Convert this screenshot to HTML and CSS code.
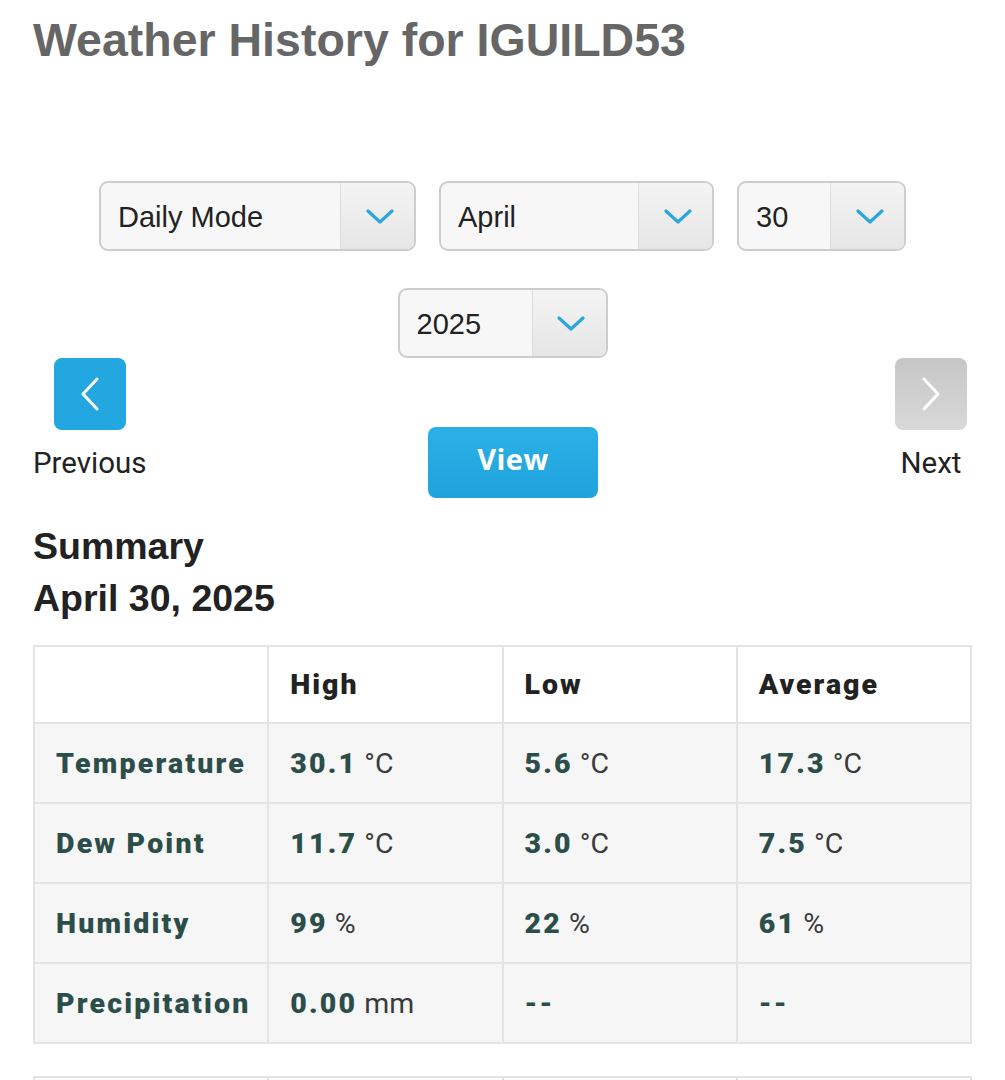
FILE: index.html
```html
<!DOCTYPE html>
<html lang="en">
<head>
<meta charset="utf-8">
<title>Weather History for IGUILD53</title>
<link rel="stylesheet" href="styles.css">
</head>
<body>
<div class="page">
  <h1 class="title">Weather History for IGUILD53</h1>

  <div class="selects">
    <div class="select-row">
      <div class="select w-mode"><span class="select-text">Daily Mode</span><span class="select-arrow"><svg width="28" height="15" viewBox="0 0 28 15"><polyline points="2,2 14,13 26,2" fill="none" stroke="#2aa6dc" stroke-width="3.2" stroke-linecap="round" stroke-linejoin="round"/></svg></span></div>
      <div class="select w-month"><span class="select-text">April</span><span class="select-arrow"><svg width="28" height="15" viewBox="0 0 28 15"><polyline points="2,2 14,13 26,2" fill="none" stroke="#2aa6dc" stroke-width="3.2" stroke-linecap="round" stroke-linejoin="round"/></svg></span></div>
      <div class="select w-day"><span class="select-text">30</span><span class="select-arrow"><svg width="28" height="15" viewBox="0 0 28 15"><polyline points="2,2 14,13 26,2" fill="none" stroke="#2aa6dc" stroke-width="3.2" stroke-linecap="round" stroke-linejoin="round"/></svg></span></div>
    </div>
    <div class="select-row">
      <div class="select w-year"><span class="select-text">2025</span><span class="select-arrow"><svg width="28" height="15" viewBox="0 0 28 15"><polyline points="2,2 14,13 26,2" fill="none" stroke="#2aa6dc" stroke-width="3.2" stroke-linecap="round" stroke-linejoin="round"/></svg></span></div>
    </div>
  </div>

  <div class="nav">
    <div class="nav-item prev">
      <span class="nav-btn blue"><svg width="20" height="34" viewBox="0 0 20 34"><polyline points="17,2 3,17 17,32" fill="none" stroke="#fff" stroke-width="3" stroke-linecap="round" stroke-linejoin="round"/></svg></span>
      <span class="nav-label">Previous</span>
    </div>
    <button class="view-btn">View</button>
    <div class="nav-item next">
      <span class="nav-btn gray"><svg width="20" height="34" viewBox="0 0 20 34"><polyline points="3,2 17,17 3,32" fill="none" stroke="#fff" stroke-width="3" stroke-linecap="round" stroke-linejoin="round"/></svg></span>
      <span class="nav-label">Next</span>
    </div>
  </div>

  <h2 class="summary">Summary<br>April 30, 2025</h2>

  <table class="wx">
    <thead>
      <tr><th></th><th>High</th><th>Low</th><th>Average</th></tr>
    </thead>
    <tbody>
      <tr><td class="lbl">Temperature</td><td><b>30.1</b> <span class="u">°C</span></td><td><b>5.6</b> <span class="u">°C</span></td><td><b>17.3</b> <span class="u">°C</span></td></tr>
      <tr><td class="lbl">Dew Point</td><td><b>11.7</b> <span class="u">°C</span></td><td><b>3.0</b> <span class="u">°C</span></td><td><b>7.5</b> <span class="u">°C</span></td></tr>
      <tr><td class="lbl">Humidity</td><td><b>99</b> <span class="u">%</span></td><td><b>22</b> <span class="u">%</span></td><td><b>61</b> <span class="u">%</span></td></tr>
      <tr><td class="lbl">Precipitation</td><td><b>0.00</b> <span class="u">mm</span></td><td><b>--</b></td><td><b>--</b></td></tr>
    </tbody>
  </table>

  <table class="wx second">
    <thead>
      <tr><th></th><th></th><th></th><th></th></tr>
    </thead>
  </table>
</div>
</body>
</html>
```

FILE: styles.css
```css
html, body {
  margin: 0;
  padding: 0;
  background: #fff;
}

.page {
  padding: 0 33px;
  font-family: "Liberation Sans", Arial, sans-serif;
}

.title {
  margin: 17px 0 0;
  font-size: 46.5px;
  line-height: 46px;
  font-weight: 700;
  color: #666;
}

.selects {
  margin-top: 118px;
  display: flex;
  flex-direction: column;
  gap: 37px;
}

.select-row {
  display: flex;
  justify-content: center;
  gap: 23px;
}

.select {
  box-sizing: border-box;
  height: 70px;
  display: flex;
  align-items: stretch;
  border: 2px solid #cdcdcd;
  border-radius: 9px;
  background: #f7f7f7;
  overflow: hidden;
}

.w-mode { width: 317px; }
.w-month { width: 275px; }
.w-day { width: 169px; }
.w-year { width: 210px; }

.select-text {
  flex: 1;
  display: flex;
  align-items: center;
  padding: 2px 0 0 17px;
  font-size: 29px;
  color: #222;
}

.select-arrow {
  width: 74px;
  display: flex;
  align-items: center;
  justify-content: center;
  padding-left: 4px;
  box-sizing: border-box;
  border-left: 1px solid #dcdcdc;
  background: linear-gradient(#f4f4f4, #e6e6e6);
}

.nav {
  display: grid;
  grid-template-columns: 1fr auto 1fr;
  align-items: start;
  height: 140px;
}

.nav-item {
  display: flex;
  flex-direction: column;
  align-items: center;
}

.prev { justify-self: start; }
.next { justify-self: end; margin-right: 5px; }

.nav-btn {
  width: 72px;
  height: 72px;
  border-radius: 8px;
  display: flex;
  align-items: center;
  justify-content: center;
}

.nav-btn.blue { background: #22a7e0; }
.nav-btn.gray { background: linear-gradient(#c6c6c6, #d9d9d9); }

.nav-label {
  margin-top: 16px;
  font-family: Roboto, "Liberation Sans", sans-serif;
  font-size: 29.5px;
  line-height: 34px;
  color: #222;
}

.view-btn {
  margin: 69px 0 0 21px;
  width: 170px;
  height: 71px;
  border: 0;
  border-radius: 8px;
  background: linear-gradient(#2bb0e6, #1ea3dd);
  color: #fff;
  font-family: "Open Sans", sans-serif;
  font-weight: 700;
  font-size: 29px;
  letter-spacing: 0.5px;
  padding: 0 0 8px;
}

.summary {
  margin: 22px 0 0;
  font-size: 37.5px;
  line-height: 52px;
  font-weight: 700;
  color: #222;
}

.wx {
  margin-top: 21px;
  width: 100%;
  border-collapse: collapse;
  table-layout: fixed;
  font-family: Roboto, "Liberation Sans", sans-serif;
}

.wx th, .wx td {
  border: 2px solid #e4e4e4;
  text-align: left;
  padding: 0 21px;
  font-size: 28.5px;
}

.wx th {
  height: 75px;
  background: #fff;
  color: #222;
  font-weight: 900;
  letter-spacing: 2px;
}

.wx td {
  height: 78px;
  background: #f6f6f6;
}

.wx td.lbl, .wx td b {
  color: #2c4e4a;
  font-weight: 900;
  letter-spacing: 2.2px;
}

.wx .u {
  color: #3a3a3a;
  font-weight: 400;
  letter-spacing: 0;
}

.wx.second {
  margin-top: 32px;
}
```
